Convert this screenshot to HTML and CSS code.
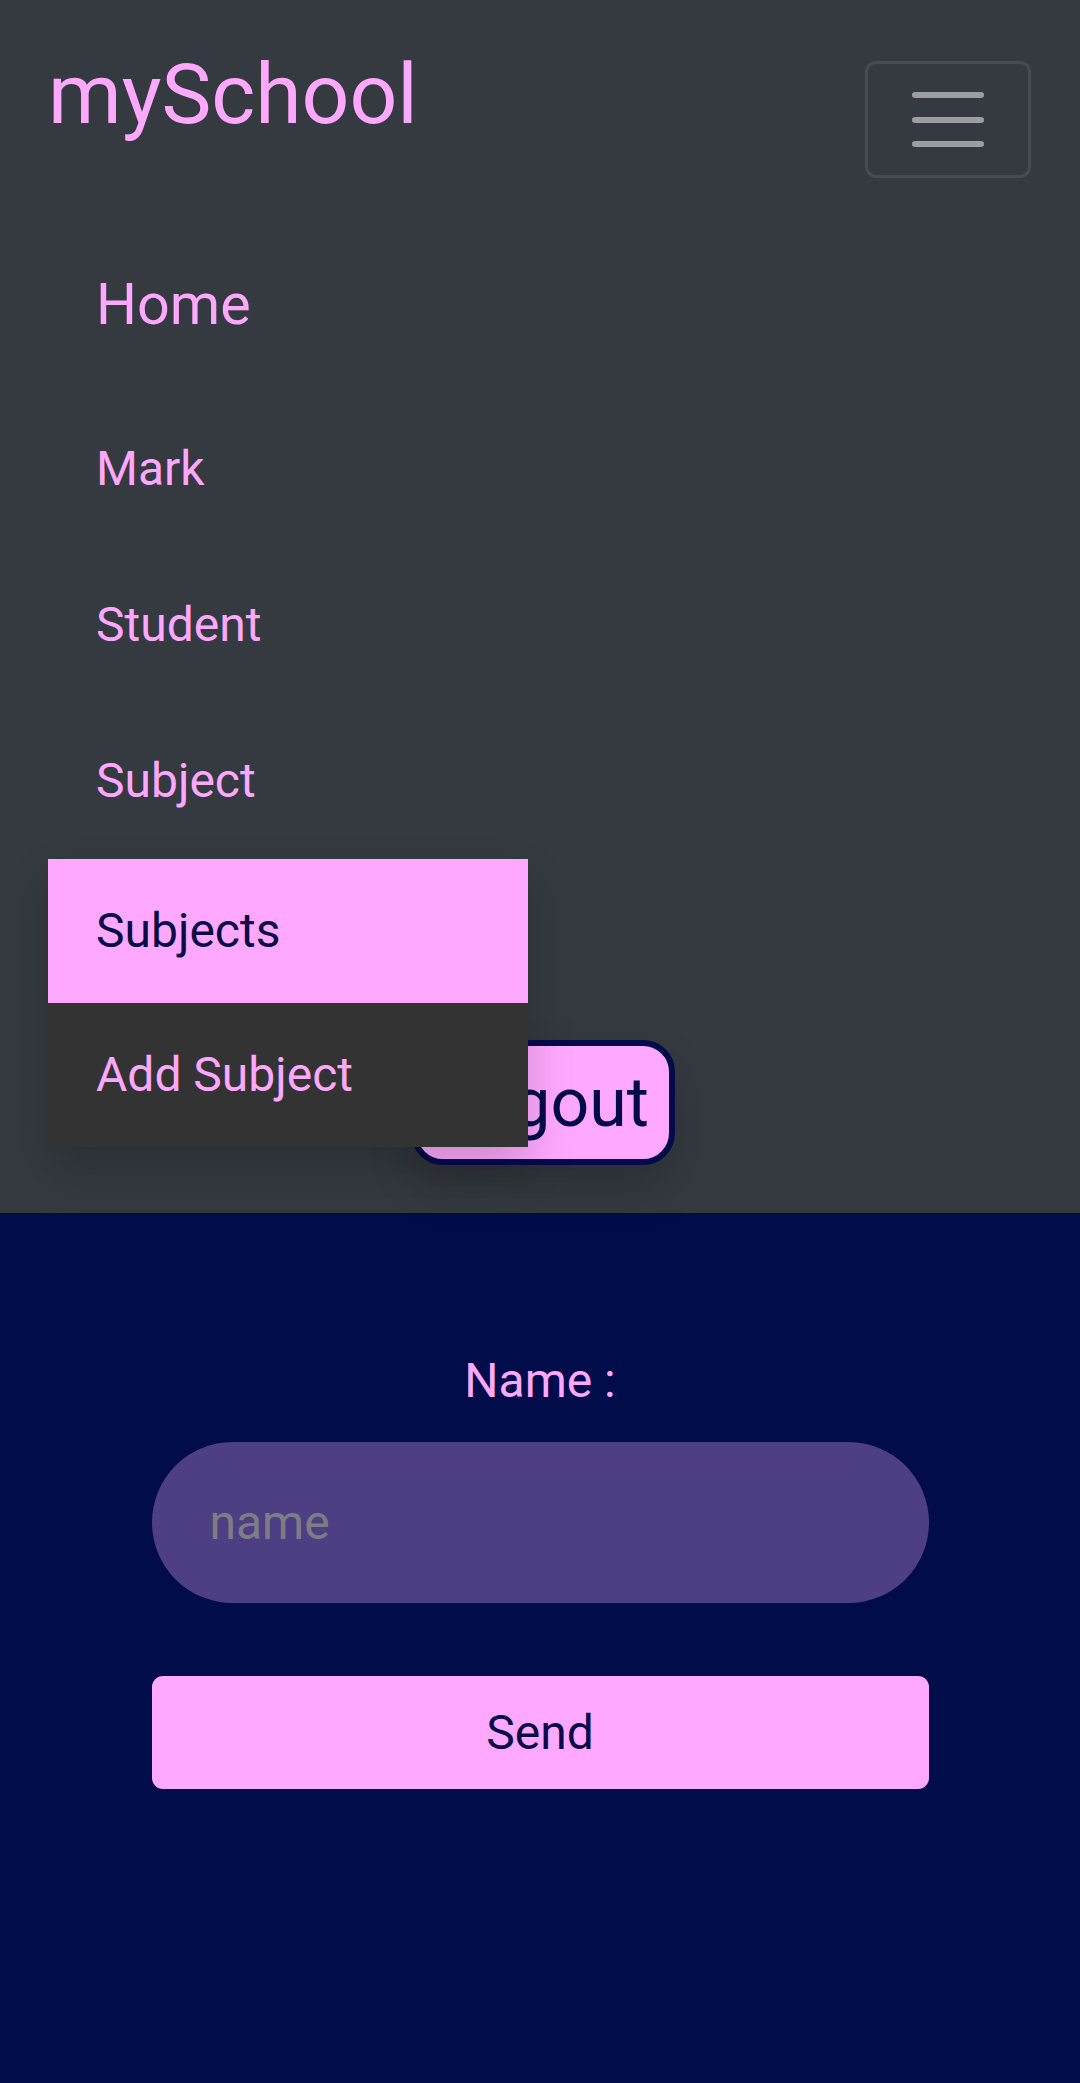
FILE: index.html
```html
<!DOCTYPE html>
<html lang="en">
<head>
<meta charset="utf-8">
<title>mySchool</title>
<link rel="stylesheet" href="styles.css">
</head>
<body>
<nav class="navbar">
  <div class="navbar-top">
    <a class="brand" href="#">mySchool</a>
    <button class="toggler" type="button" aria-label="Toggle navigation">
      <svg class="toggler-icon" width="78" height="62" viewBox="0 0 78 62">
        <path d="M6 6H72M6 31H72M6 55H72" stroke="#9a9da1" stroke-width="6" stroke-linecap="round" fill="none"/>
      </svg>
    </button>
  </div>
  <ul class="nav-list">
    <li class="nav-item nav-home"><a class="nav-link" href="#">Home</a></li>
    <li class="nav-item"><a class="nav-link" href="#">Mark</a></li>
    <li class="nav-item"><a class="nav-link" href="#">Student</a></li>
    <li class="nav-item dropdown">
      <a class="nav-link" href="#">Subject</a>
      <ul class="dropdown-menu">
        <li><a class="dropdown-item active" href="#">Subjects</a></li>
        <li><a class="dropdown-item" href="#">Add Subject</a></li>
      </ul>
    </li>
    <li class="nav-item logout-item"><button class="logout" type="button">Logout</button></li>
  </ul>
</nav>
<main class="form-section">
  <form class="name-form">
    <label class="name-label" for="name">Name :</label>
    <input class="name-input" id="name" type="text" placeholder="name">
    <button class="send" type="button">Send</button>
  </form>
</main>
</body>
</html>
```
FILE: styles.css
```css
html {
  background: #010d4b;
}
body {
  margin: 0;
  min-height: 2083px;
  background: #010d4b;
  font-family: Roboto, "Noto Sans", sans-serif;
}
ul {
  list-style: none;
  margin: 0;
  padding: 0;
}
a {
  text-decoration: none;
}

.navbar {
  background: #343a40;
  padding: 45px 49px 48px 48px;
}
.navbar-top {
  display: flex;
  justify-content: space-between;
  align-items: flex-start;
}
.brand {
  color: #ffa8ff;
  font-size: 84px;
  line-height: normal;
}
.toggler {
  margin-top: 16px;
  width: 166px;
  height: 117px;
  box-sizing: border-box;
  border: 3px solid #474c52;
  border-radius: 11px;
  background: transparent;
  display: flex;
  align-items: center;
  justify-content: center;
  padding: 0;
}
.toggler-icon {
  display: block;
}

.nav-list {
  margin-top: 41px;
}
.nav-link {
  display: block;
  padding-left: 48px;
  color: #ffa8ff;
  font-size: 48px;
  line-height: 156px;
}
.nav-home .nav-link {
  font-size: 57.5px;
  line-height: 172px;
}
.dropdown {
  position: relative;
}
.dropdown-menu {
  position: absolute;
  top: 100%;
  left: 0;
  width: 480px;
  z-index: 10;
  background: #333333;
  box-shadow: 0 22px 44px rgba(0, 0, 0, 0.18);
}
.dropdown-item {
  display: block;
  padding-left: 48px;
  color: #ffa8ff;
  font-size: 48px;
  line-height: 144px;
}
.dropdown-item.active {
  background: #ffa8ff;
  color: #0a0c4a;
}
.logout-item {
  margin-top: 181px;
  display: flex;
  justify-content: center;
  padding-left: 7px;
}
.logout {
  height: 125px;
  box-sizing: border-box;
  padding: 0 20px;
  border: 6px solid #020b4a;
  border-radius: 32px;
  background: #ffa8ff;
  color: #020b4a;
  font-family: Roboto, "Noto Sans", sans-serif;
  font-size: 68px;
  line-height: 1;
  box-shadow: 0 22px 44px rgba(0, 0, 0, 0.18);
}

.form-section {
  padding-top: 139px;
}
.name-form {
  display: flex;
  flex-direction: column;
  align-items: center;
}
.name-label {
  color: #ffa8ff;
  font-size: 48px;
  line-height: normal;
}
.name-input {
  margin-top: 33px;
  width: 777px;
  height: 161px;
  box-sizing: border-box;
  border: none;
  border-radius: 81px;
  background: #4e3f85;
  padding: 0 58px;
  font-family: Roboto, "Noto Sans", sans-serif;
  font-size: 48px;
  color: #ffa8ff;
  outline: none;
}
.name-input::placeholder {
  color: #7f7d84;
}
.send {
  margin-top: 73px;
  width: 777px;
  height: 113px;
  border: none;
  border-radius: 11px;
  background: #ffa8ff;
  color: #0a0c4a;
  font-family: Roboto, "Noto Sans", sans-serif;
  font-size: 48px;
}
```
